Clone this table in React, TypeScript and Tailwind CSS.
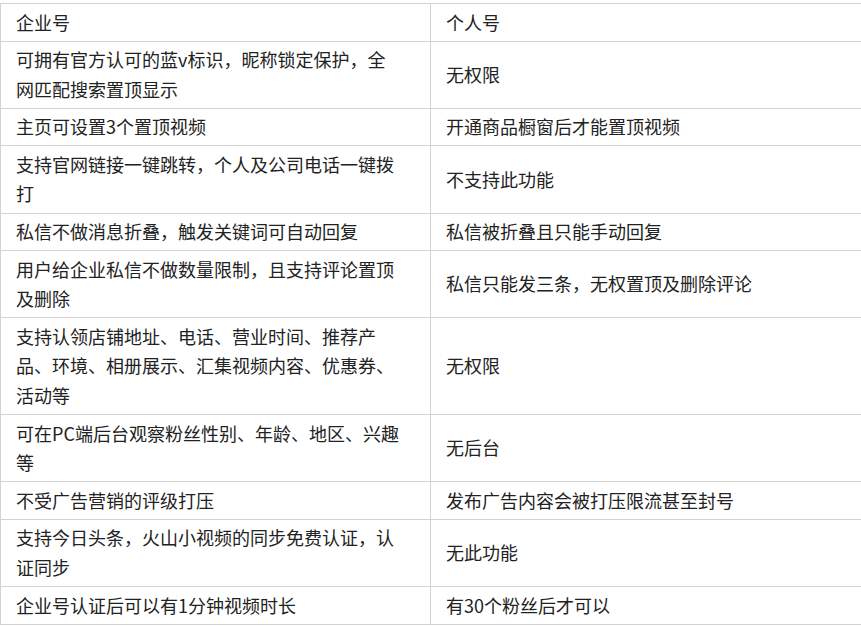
const rows: [string[], string[]][] = [
  [["企业号"], ["个人号"]],
  [["可拥有官方认可的蓝v标识，昵称锁定保护，全", "网匹配搜索置顶显示"], ["无权限"]],
  [["主页可设置3个置顶视频"], ["开通商品橱窗后才能置顶视频"]],
  [["支持官网链接一键跳转，个人及公司电话一键拨", "打"], ["不支持此功能"]],
  [["私信不做消息折叠，触发关键词可自动回复"], ["私信被折叠且只能手动回复"]],
  [["用户给企业私信不做数量限制，且支持评论置顶", "及删除"], ["私信只能发三条，无权置顶及删除评论"]],
  [
    ["支持认领店铺地址、电话、营业时间、推荐产", "品、环境、相册展示、汇集视频内容、优惠券、", "活动等"],
    ["无权限"],
  ],
  [["可在PC端后台观察粉丝性别、年龄、地区、兴趣", "等"], ["无后台"]],
  [["不受广告营销的评级打压"], ["发布广告内容会被打压限流甚至封号"]],
  [["支持今日头条，火山小视频的同步免费认证，认", "证同步"], ["无此功能"]],
  [["企业号认证后可以有1分钟视频时长"], ["有30个粉丝后才可以"]],
];

function Cell({ lines }: { lines: string[] }) {
  return (
    <td className="border border-[#d3d3d3] py-[3.5px] pl-[15px] pr-[15px] align-middle">
      {lines.map((line, i) => (
        <div key={i} className="whitespace-nowrap">
          {line}
        </div>
      ))}
    </td>
  );
}

export default function App() {
  return (
    <div
      className="min-h-[626px] w-[861px] overflow-hidden bg-white pt-[3px] text-[18px] leading-[29.6px] text-[#222]"
      style={{ fontFamily: '"Noto Sans CJK SC", "Noto Sans", sans-serif' }}
    >
      <table className="w-[862px] table-fixed border-collapse">
        <colgroup>
          <col className="w-[430px]" />
          <col className="w-[432px]" />
        </colgroup>
        <tbody>
          {rows.map(([left, right], i) => (
            <tr key={i}>
              <Cell lines={left} />
              <Cell lines={right} />
            </tr>
          ))}
        </tbody>
      </table>
    </div>
  );
}
